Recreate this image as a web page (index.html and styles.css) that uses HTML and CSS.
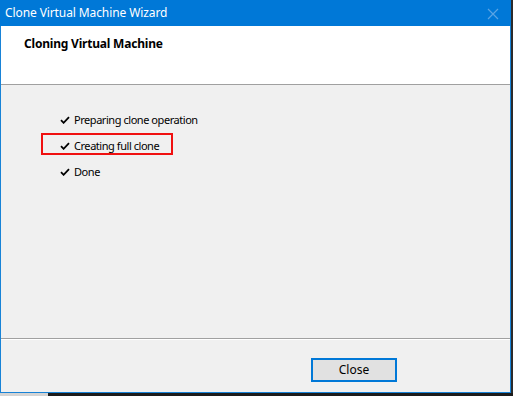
FILE: index.html
```html
<!DOCTYPE html>
<html>
<head>
<meta charset="utf-8">
<link rel="stylesheet" href="styles.css">
</head>
<body>
<div class="screen">
  <div class="row-main">
    <div class="window">
      <div class="titlebar">
        <span class="title">Clone Virtual Machine Wizard</span>
        <svg class="close-x" width="12" height="12" viewBox="0 0 12 12"><path d="M1 1L11 11M11 1L1 11" stroke="#5aa4e4" stroke-width="1.2"/></svg>
      </div>
      <div class="header">
        <div class="heading">Cloning Virtual Machine</div>
      </div>
      <div class="content">
        <ul class="steps">
          <li class="step"><svg class="check" width="10" height="8" viewBox="0 0 10 8"><path d="M1 4.2L3.6 6.8L9 1.2" fill="none" stroke="#000" stroke-width="1.8"/></svg><span>Preparing clone operation</span></li>
          <li class="step current"><svg class="check" width="10" height="8" viewBox="0 0 10 8"><path d="M1 4.2L3.6 6.8L9 1.2" fill="none" stroke="#000" stroke-width="1.8"/></svg><span>Creating full clone</span></li>
          <li class="step"><svg class="check" width="10" height="8" viewBox="0 0 10 8"><path d="M1 4.2L3.6 6.8L9 1.2" fill="none" stroke="#000" stroke-width="1.8"/></svg><span>Done</span></li>
        </ul>
      </div>
      <div class="footer">
        <button class="btn">Close</button>
      </div>
    </div>
    <div class="right-edge"></div>
  </div>
  <div class="bottom-edge">
    <div class="shadow"></div>
  </div>
</div>
</body>
</html>
```
FILE: styles.css
```css
html, body {
  margin: 0;
  padding: 0;
}
body {
  width: 513px;
  height: 396px;
  background: #1c1c1c;
  font-family: "Noto Sans", "Open Sans", sans-serif;
  font-size: 12px;
  color: #000;
  overflow: hidden;
}
.screen {
  display: flex;
  flex-direction: column;
}
.row-main {
  display: flex;
}
.window {
  width: 509px;
  height: 392px;
  border: 1px solid #1883d7;
  border-top: none;
  background: #f0f0f0;
  display: flex;
  flex-direction: column;
}
.right-edge {
  width: 2px;
  background: #2b2b2b;
}
.bottom-edge {
  height: 3px;
  display: flex;
}
.shadow {
  width: 48px;
  background: #d4d4d4;
}
.titlebar {
  height: 26px;
  background: #0078d7;
  display: flex;
  align-items: center;
  justify-content: space-between;
  padding: 0 12px 0 5px;
  margin: 0 -1px;
}
.title {
  color: #fff;
  font-size: 12px;
  letter-spacing: -0.1px;
  padding-bottom: 1px;
}
.close-x {
  margin-top: 1px;
}
.header {
  background: #fff;
  border-bottom: 1px solid #a0a0a0;
  padding: 0 0 0 23px;
  box-sizing: border-box;
  height: 59px;
}
.heading {
  font-weight: bold;
  font-size: 12px;
  margin-top: 9px;
  letter-spacing: -0.2px;
}
.content {
  flex: 1;
  border-bottom: 1px solid #a0a0a0;
  box-shadow: 0 1px 0 #fff;
  padding-top: 21px;
}
.steps {
  list-style: none;
  margin: 0;
  padding: 0 0 0 59px;
}
.step {
  height: 26px;
  display: flex;
  align-items: center;
  font-size: 11px;
  letter-spacing: -0.45px;
}
.step.current {
  position: relative;
}
.step.current::before {
  content: "";
  position: absolute;
  left: -19px;
  top: 1px;
  width: 128px;
  height: 18px;
  border: 2px solid #f01010;
}
.check {
  margin-right: 4px;
  margin-top: 1px;
}
.footer {
  height: 52px;
  margin-top: 1px;
  display: flex;
  justify-content: flex-end;
  align-items: flex-start;
  padding: 18px 113px 0 0;
  box-sizing: border-box;
}
.btn {
  width: 86px;
  height: 24px;
  border: 2px solid #0078d7;
  background: #e1e1e1;
  font-family: "Noto Sans", sans-serif;
  font-size: 12px;
  padding: 0 0 1px;
  color: #000;
}
```
